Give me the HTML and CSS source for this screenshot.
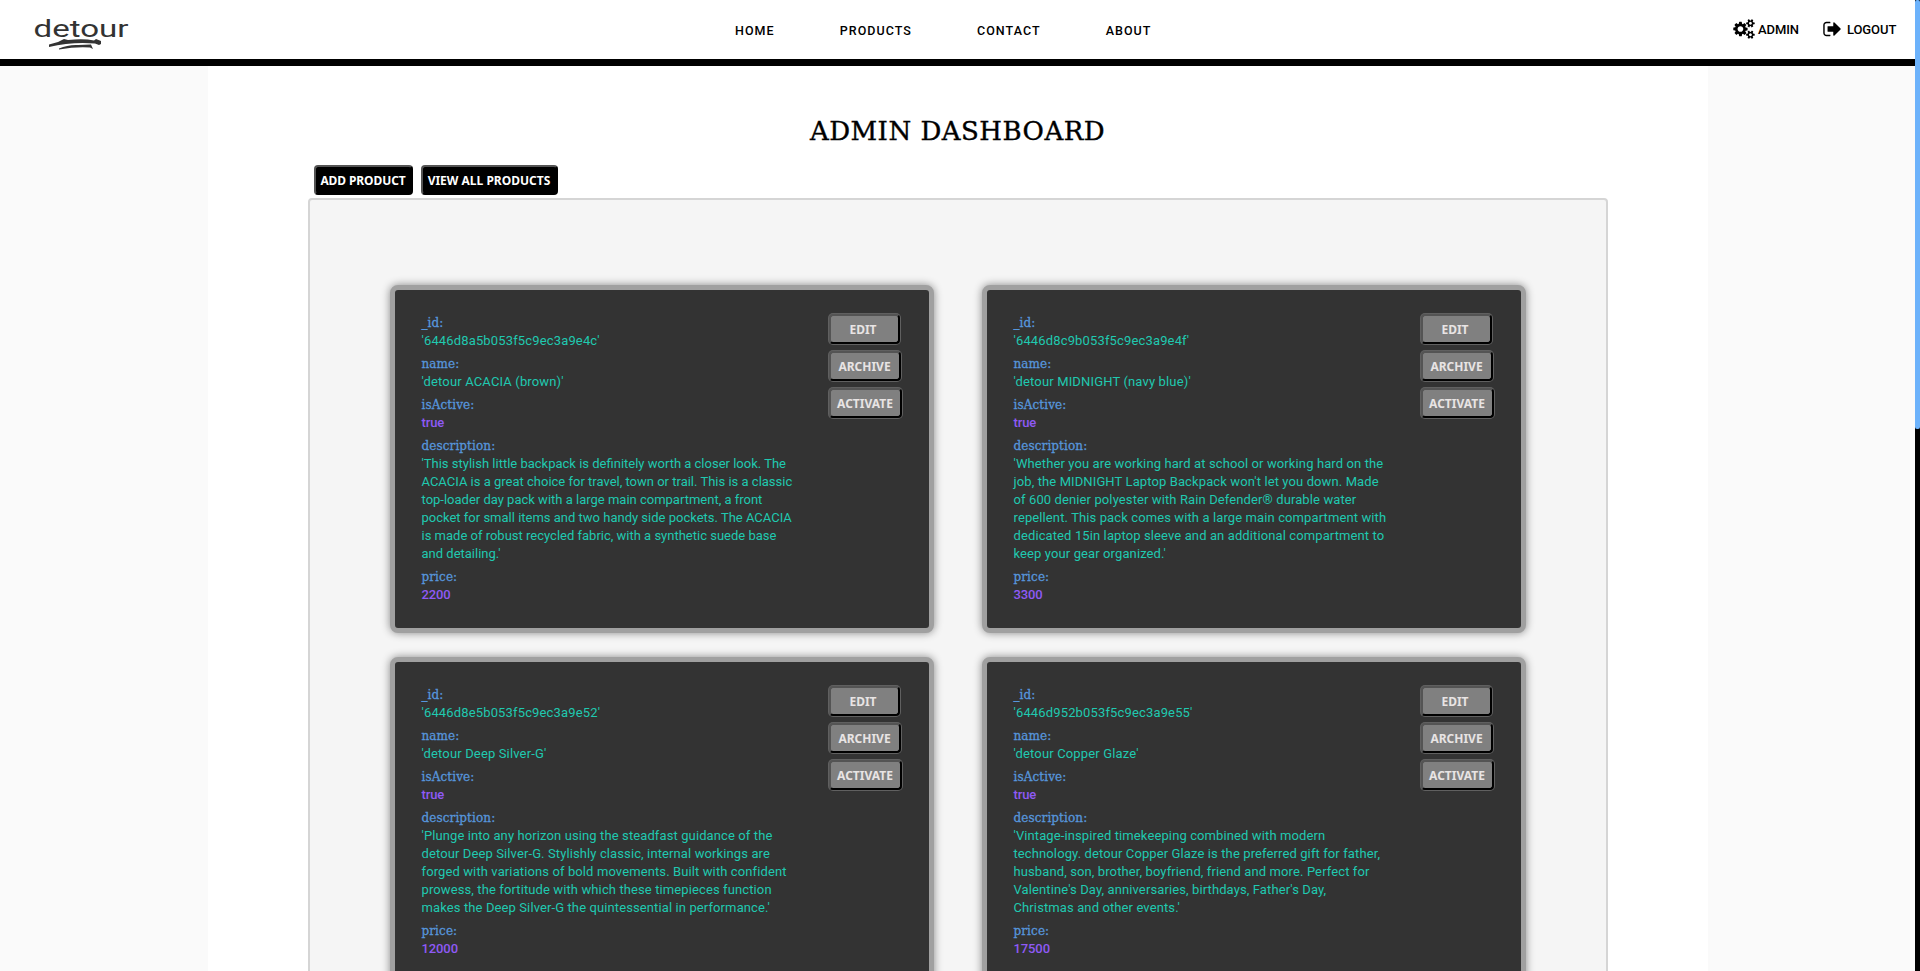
FILE: index.html
```
<!DOCTYPE html>
<html lang="en">
<head>
	<meta charset="UTF-8">
	<title>detour | Admin Dashboard</title>
	<link rel="stylesheet" href="styles.css">
</head>
<body>
	<div class="page">
		<header class="navbar">
			<a class="logo" href="#">
				<svg width="100" height="36" viewBox="0 0 100 36">
					<text x="-0.5" y="21.5" textLength="95" lengthAdjust="spacingAndGlyphs">detour</text>
					<path d="M15 29.5 L24 27 L30 24 L34 25 Q50 23.5 60 25.5 L62 24 L67 26 L67 29 L65 30 L61 28.5 Q38 26.5 15 32z M25 33.5 Q34 29.5 44 30 L57 29.5 L59 34 L56 32.5 Q42 31.5 25 34.5z"/>
				</svg>
			</a>
			<nav class="nav-links">
				<a href="#">HOME</a>
				<a href="#">PRODUCTS</a>
				<a href="#">CONTACT</a>
				<a href="#">ABOUT</a>
			</nav>
			<div class="nav-user">
				<a class="admin" href="#">
					<svg width="22" height="20" viewBox="0 0 1920 1792"><path d="M896 896q0-106-75-181t-181-75-181 75-75 181 75 181 181 75 181-75 75-181zm768 512q0-52-38-90t-90-38-90 38-38 90q0 53 37.5 90.5t90.5 37.5 90.5-37.5 37.5-90.5zm0-1024q0-52-38-90t-90-38-90 38-38 90q0 53 37.5 90.5t90.5 37.5 90.5-37.5 37.5-90.5zm-384 421v185q0 10-7 19.5t-16 10.5l-155 24q-11 35-32 76 34 48 90 115 7 11 7 20 0 12-7 19-23 30-82.5 89.5t-78.5 59.5q-11 0-21-7l-115-90q-37 19-77 31-11 108-23 155-7 24-30 24h-186q-11 0-20-7.5t-10-17.5l-23-153q-34-10-75-31l-118 89q-7 7-20 7-11 0-21-8-144-133-144-160 0-9 7-19 10-14 41-53t47-61q-23-44-35-82l-152-24q-10-1-17-9.5t-7-19.5v-185q0-10 7-19.5t16-10.5l155-24q11-35 32-76-34-48-90-115-7-11-7-20 0-12 7-20 22-30 82-89t79-59q11 0 21 7l115 90q34-18 77-32 11-108 23-154 7-24 30-24h186q11 0 20 7.5t10 17.5l23 153q34 10 75 31l118-89q8-7 20-7 11 0 21 8 144 133 144 160 0 8-7 19-12 16-42 54t-45 60q23 48 34 82l152 23q10 2 17 10.5t7 19.5zm640 533v140q0 16-149 31-12 27-30 52 51 113 51 138 0 4-4 7-122 71-124 71-8 0-46-47t-52-68q-20 2-30 2t-30-2q-14 21-52 68t-46 47q-2 0-124-71-4-3-4-7 0-25 51-138-18-25-30-52-149-15-149-31v-140q0-16 149-31 13-29 30-52-51-113-51-138 0-4 4-7 4-2 35-20t59-34 30-16q8 0 46 46.5t52 67.5q20-2 30-2t30 2q51-71 92-112l6-2q4 0 124 70 4 3 4 7 0 25-51 138 17 23 30 52 149 15 149 31zm0-1024v140q0 16-149 31-12 27-30 52 51 113 51 138 0 4-4 7-122 71-124 71-8 0-46-47t-52-68q-20 2-30 2t-30-2q-14 21-52 68t-46 47q-2 0-124-71-4-3-4-7 0-25 51-138-18-25-30-52-149-15-149-31v-140q0-16 149-31 13-29 30-52-51-113-51-138 0-4 4-7 4-2 35-20t59-34 30-16q8 0 46 46.5t52 67.5q20-2 30-2t30 2q51-71 92-112l6-2q4 0 124 70 4 3 4 7 0 25-51 138 17 23 30 52 149 15 149 31z"/></svg>
					<span>ADMIN</span>
				</a>
				<a class="logout" href="#">
					<svg width="18" height="20" viewBox="48 0 1600 1792"><path d="M704 1440q0 4 1 20t.5 26.5-3 23.5-10 19.5-20.5 6.5h-320q-119 0-203.5-84.5t-84.5-203.5v-704q0-119 84.5-203.5t203.5-84.5h320q13 0 22.5 9.5t9.5 22.5q0 4 1 20t.5 26.5-3 23.5-10 19.5-20.5 6.5h-320q-66 0-113 47t-47 113v704q0 66 47 113t113 47h312l11.5 1 11.5 3 8 5.5 7 9 2 13.5zm928-544q0 26-19 45l-544 544q-19 19-45 19t-45-19-19-45v-288h-448q-26 0-45-19t-19-45v-384q0-26 19-45t45-19h448v-288q0-26 19-45t45-19 45 19l544 544q19 19 19 45z"/></svg>
					<span>LOGOUT</span>
				</a>
			</div>
		</header>

		<main class="container">
			<h1>ADMIN DASHBOARD</h1>
			<div class="toolbar">
				<button class="add">ADD PRODUCT</button>
				<button class="view">VIEW ALL PRODUCTS</button>
			</div>

			<div class="panel">
				<div class="card">
					<dl>
						<dt>_id:</dt>
						<dd class="short">'6446d8a5b053f5c9ec3a9e4c'</dd>
						<dt>name:</dt>
						<dd class="short">'detour ACACIA (brown)'</dd>
						<dt>isActive:</dt>
						<dd class="literal">true</dd>
						<dt>description:</dt>
						<dd class="first">'This stylish little backpack is definitely worth a closer look. The<br>ACACIA is a great choice for travel, town or trail. This is a classic<br>top-loader day pack with a large main compartment, a front<br>pocket for small items and two handy side pockets. The ACACIA<br>is made of robust recycled fabric, with a synthetic suede base<br>and detailing.'</dd>
						<dt>price:</dt>
						<dd class="literal">2200</dd>
					</dl>
					<div class="actions">
						<button class="edit">EDIT</button>
						<button class="archive">ARCHIVE</button>
						<button class="activate">ACTIVATE</button>
					</div>
				</div>

				<div class="card">
					<dl>
						<dt>_id:</dt>
						<dd class="short">'6446d8c9b053f5c9ec3a9e4f'</dd>
						<dt>name:</dt>
						<dd class="short">'detour MIDNIGHT (navy blue)'</dd>
						<dt>isActive:</dt>
						<dd class="literal">true</dd>
						<dt>description:</dt>
						<dd>'Whether you are working hard at school or working hard on the<br>job, the MIDNIGHT Laptop Backpack won't let you down. Made<br>of 600 denier polyester with Rain Defender® durable water<br>repellent. This pack comes with a large main compartment with<br>dedicated 15in laptop sleeve and an additional compartment to<br>keep your gear organized.'</dd>
						<dt>price:</dt>
						<dd class="literal">3300</dd>
					</dl>
					<div class="actions">
						<button class="edit">EDIT</button>
						<button class="archive">ARCHIVE</button>
						<button class="activate">ACTIVATE</button>
					</div>
				</div>

				<div class="card">
					<dl>
						<dt>_id:</dt>
						<dd class="short">'6446d8e5b053f5c9ec3a9e52'</dd>
						<dt>name:</dt>
						<dd class="short">'detour Deep Silver-G'</dd>
						<dt>isActive:</dt>
						<dd class="literal">true</dd>
						<dt>description:</dt>
						<dd>'Plunge into any horizon using the steadfast guidance of the<br>detour Deep Silver-G. Stylishly classic, internal workings are<br>forged with variations of bold movements. Built with confident<br>prowess, the fortitude with which these timepieces function<br>makes the Deep Silver-G the quintessential in performance.'</dd>
						<dt>price:</dt>
						<dd class="literal">12000</dd>
					</dl>
					<div class="actions">
						<button class="edit">EDIT</button>
						<button class="archive">ARCHIVE</button>
						<button class="activate">ACTIVATE</button>
					</div>
				</div>

				<div class="card">
					<dl>
						<dt>_id:</dt>
						<dd class="short">'6446d952b053f5c9ec3a9e55'</dd>
						<dt>name:</dt>
						<dd class="short">'detour Copper Glaze'</dd>
						<dt>isActive:</dt>
						<dd class="literal">true</dd>
						<dt>description:</dt>
						<dd>'Vintage-inspired timekeeping combined with modern<br>technology. detour Copper Glaze is the preferred gift for father,<br>husband, son, brother, boyfriend, friend and more. Perfect for<br>Valentine's Day, anniversaries, birthdays, Father's Day,<br>Christmas and other events.'</dd>
						<dt>price:</dt>
						<dd class="literal">17500</dd>
					</dl>
					<div class="actions">
						<button class="edit">EDIT</button>
						<button class="archive">ARCHIVE</button>
						<button class="activate">ACTIVATE</button>
					</div>
				</div>
			</div>
		</main>
	</div>
	<div class="scrollbar"><div class="thumb"></div></div>
</body>
</html>
```
FILE: styles.css
```
* {
	box-sizing: border-box;
}
body {
	margin: 0;
	height: 100vh;
	display: flex;
	overflow: hidden;
	background-color: #fafafa;
	font-family: Roboto, 'Noto Sans', sans-serif;
	font-size: 13px;
	color: #000;
}
a {
	color: #000;
	text-decoration: none;
}
.page {
	flex: 1;
	height: 100vh;
	overflow: hidden;
}

/* Top bar */
.navbar {
	display: grid;
	grid-template-columns: 735px 1fr auto;
	height: 66px;
	background-color: #fff;
	border-bottom: 7px solid #000;
}
.logo {
	padding: 15px 0 0 34px;
}
.logo svg {
	display: block;
	fill: #333;
	overflow: visible;
}
.logo text {
	font-size: 24px;
}
.nav-links {
	display: flex;
	gap: 65px;
	padding-top: 22px;
	font-size: 12.5px;
	font-weight: 500;
	line-height: 18px;
	letter-spacing: 1.05px;
}
.nav-user {
	display: flex;
	gap: 24px;
	padding: 19px 19px 0 0;
	line-height: 21px;
	font-weight: 500;
	letter-spacing: -0.1px;
}
.nav-user a {
	display: flex;
	gap: 3px;
}
.nav-user .logout {
	gap: 6px;
}
.nav-user span {
	display: block;
}
.admin span {
	width: 41px;
}
.logout span {
	width: 49px;
}

.container {
	width: 1500px;
	margin: 0 auto;
	padding: 46px 100px 0;
	background-color: #fff;
}
h1 {
	margin: 0;
	font-family: 'DejaVu Serif', serif;
	font-size: 26px;
	font-weight: 400;
	line-height: 38px;
	letter-spacing: 0.5px;
	text-align: center;
	-webkit-text-stroke: 0.4px #000;
}
button {
	height: 30px;
	padding: 0;
	border: 2px outset #000;
	border-radius: 4px;
	font-family: 'Noto Sans', sans-serif;
	font-size: 12px;
	font-weight: 700;
}
.toolbar {
	display: flex;
	gap: 8px;
	padding: 15px 0 3px 6px;
}
.toolbar button {
	background-color: #000;
	color: #fff;
}
.add {
	width: 99px;
	letter-spacing: -0.1px;
}
.view {
	width: 137px;
}

/* Product grid */
.panel {
	display: grid;
	grid-template-columns: 1fr 1fr;
	gap: 24px 48px;
	padding: 85px 80px;
	border: 2px solid #d5d5d5;
	border-radius: 4px;
	background-color: #f5f5f5;
}
.card {
	display: flex;
	justify-content: space-between;
	padding: 24px 27px 19px 27px;
	border: 5px solid #a0a0a0;
	border-radius: 8px;
	background-color: #333;
	box-shadow: 0 0 8px rgba(0, 0, 0, 0.45);
}
dl {
	margin: 0;
	line-height: 18px;
	white-space: nowrap;
}
dt {
	font-family: 'DejaVu Serif', serif;
	font-size: 12px;
	letter-spacing: 0.1px;
	color: #5796dc;
	-webkit-text-stroke: 0.3px #5796dc;
}
dd {
	margin: 0 0 5px;
	letter-spacing: 0.11px;
	color: #20c9b0;
}
dd.first {
	letter-spacing: 0;
}
dd.short {
	letter-spacing: 0.15px;
}
dd.literal {
	font-weight: 500;
	letter-spacing: -0.1px;
	color: #8f5af5;
}
.actions {
	display: flex;
	flex-direction: column;
	gap: 7px;
	width: 73px;
}
.actions button {
	background-color: #808080;
	color: #e8e4e4;
	box-shadow: 0 0 0 1px #606060;
}
.edit {
	width: 71px;
	padding-right: 2px;
}
.archive {
	width: 72px;
}
.activate {
	width: 73px;
}

.scrollbar {
	width: 5px;
	height: 100vh;
	background-color: #000;
}
.thumb {
	height: 429px;
	border-radius: 2px;
	background-color: #6cb2fb;
}
```
